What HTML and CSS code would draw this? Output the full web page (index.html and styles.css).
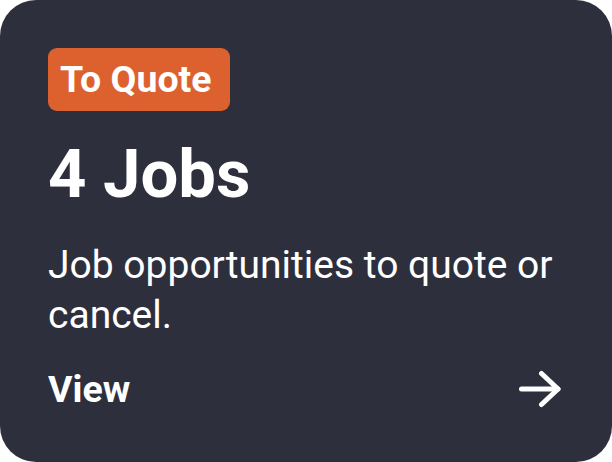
FILE: index.html
```html
<!DOCTYPE html>
<html>
<head>
<meta charset="utf-8">
<link rel="stylesheet" href="styles.css">
</head>
<body>
<div class="card">
  <span class="badge">To Quote</span>
  <h1 class="title">4 Jobs</h1>
  <p class="desc">Job opportunities to quote or cancel.</p>
  <div class="footer">
    <span class="view">View</span>
    <svg class="arrow" width="42" height="40" viewBox="0 0 42 40" fill="none" stroke="#fff" stroke-width="5" stroke-linecap="round" stroke-linejoin="round">
      <path d="M2.5 20 H39"/>
      <path d="M22.5 4.5 L39 20 L22.5 35.5"/>
    </svg>
  </div>
</div>
</body>
</html>
```

FILE: styles.css
```css
html, body {
  margin: 0;
  padding: 0;
  background: #ffffff;
}
body {
  width: 612px;
  height: 462px;
  font-family: Roboto, "Liberation Sans", sans-serif;
}
.card {
  box-sizing: border-box;
  width: 612px;
  height: 462px;
  background: #2d2f3d;
  border-radius: 36px;
  padding: 48px 48px 0 48px;
  color: #ffffff;
  display: flex;
  flex-direction: column;
  align-items: flex-start;
}
.badge {
  background: #dc612e;
  border-radius: 9px;
  font-weight: 700;
  font-size: 37.5px;
  line-height: 63px;
  height: 63px;
  padding: 0 18px 0 12px;
}
.title {
  margin: 23px 0 0 0;
  font-size: 67px;
  font-weight: 700;
  line-height: 80px;
}
.desc {
  margin: 26px 0 0 0;
  font-size: 39px;
  line-height: 50px;
  font-weight: 400;
  width: 520px;
}
.footer {
  margin-top: 24px;
  width: 100%;
  display: flex;
  justify-content: space-between;
  align-items: center;
}
.view {
  font-size: 37.5px;
  font-weight: 700;
  line-height: 50px;
}
.arrow {
  margin-right: 3px;
}
```
